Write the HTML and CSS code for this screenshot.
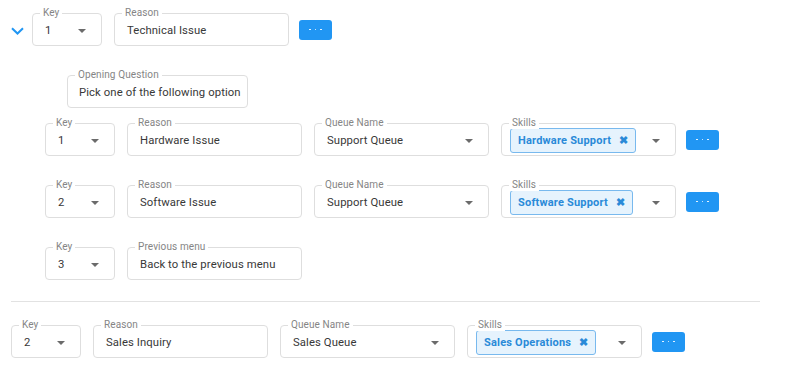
FILE: index.html
```html
<!DOCTYPE html>
<html>
<head>
<meta charset="utf-8">
<link rel="stylesheet" href="styles.css">
</head>
<body>
<div class="page">
  <div class="row row-top">
    <svg class="chevron" width="13" height="8" viewBox="0 0 13 8"><path d="M1 1.2 L6.5 6.5 L12 1.2" fill="none" stroke="#2196f3" stroke-width="2"/></svg>
    <div class="field key"><span class="label">Key</span><span class="value">1</span><span class="arrow"></span></div>
    <div class="field wide"><span class="label">Reason</span><span class="value">Technical Issue</span></div>
    <button class="more"><span></span><span></span><span></span></button>
  </div>

  <div class="row row-question">
    <div class="field question"><span class="label">Opening Question</span><span class="value">Pick one of the following option</span></div>
  </div>

  <div class="sub">
    <div class="row">
      <div class="field key"><span class="label">Key</span><span class="value">1</span><span class="arrow"></span></div>
      <div class="field wide"><span class="label">Reason</span><span class="value">Hardware Issue</span></div>
      <div class="field wide"><span class="label">Queue Name</span><span class="value">Support Queue</span><span class="arrow"></span></div>
      <div class="field wide skills"><span class="label">Skills</span><span class="chip">Hardware Support<span class="x">✖</span></span><span class="arrow"></span></div>
      <button class="more"><span></span><span></span><span></span></button>
    </div>
    <div class="row">
      <div class="field key"><span class="label">Key</span><span class="value">2</span><span class="arrow"></span></div>
      <div class="field wide"><span class="label">Reason</span><span class="value">Software Issue</span></div>
      <div class="field wide"><span class="label">Queue Name</span><span class="value">Support Queue</span><span class="arrow"></span></div>
      <div class="field wide skills"><span class="label">Skills</span><span class="chip">Software Support<span class="x">✖</span></span><span class="arrow"></span></div>
      <button class="more"><span></span><span></span><span></span></button>
    </div>
    <div class="row">
      <div class="field key"><span class="label">Key</span><span class="value">3</span><span class="arrow"></span></div>
      <div class="field wide"><span class="label">Previous menu</span><span class="value">Back to the previous menu</span></div>
    </div>
  </div>

  <hr class="divider">

  <div class="row row-bottom">
    <div class="field key"><span class="label">Key</span><span class="value">2</span><span class="arrow"></span></div>
    <div class="field wide"><span class="label">Reason</span><span class="value">Sales Inquiry</span></div>
    <div class="field wide"><span class="label">Queue Name</span><span class="value">Sales Queue</span><span class="arrow"></span></div>
    <div class="field wide skills"><span class="label">Skills</span><span class="chip">Sales Operations<span class="x">✖</span></span><span class="arrow"></span></div>
    <button class="more"><span></span><span></span><span></span></button>
  </div>
</div>
</body>
</html>
```
FILE: styles.css
```css
* { box-sizing: border-box; }
html, body { margin: 0; padding: 0; background: #fff; }
body { font-family: Roboto, "Noto Sans", Arial, sans-serif; color: #333; }

.page { padding-top: 13px; width: 790px; }

.row { display: flex; align-items: center; gap: 12px; height: 33px; }

.row-top { padding-left: 11px; }
.chevron { margin-right: -4px; margin-top: 2px; }

.row-question { margin-top: 29px; padding-left: 67px; }

.sub { margin-top: 15px; padding-left: 45px; display: flex; flex-direction: column; gap: 29px; }

.divider { margin: 21px 0 0 11px; width: 749px; border: 0; border-top: 1px solid #e2e2e2; height: 0; }

.row-bottom { margin-top: 23px; padding-left: 11px; }

.field {
  position: relative;
  height: 33px;
  border: 1px solid #dedede;
  border-radius: 4px;
  display: flex;
  align-items: center;
  padding: 2px 15px 0 12px;
  font-size: 11.3px;
  letter-spacing: 0.1px;
  color: #383838;
  flex: none;
}
.field.key { width: 70px; }
.field.wide { width: 175px; }
.field.question { width: 181px; padding-left: 11px; }
.field.skills { padding-left: 8px; }

.label {
  position: absolute;
  top: -7px;
  left: 7px;
  padding: 0 3px;
  background: #fff;
  font-size: 10px;
  line-height: 12px;
  color: #858585;
}

.value { white-space: nowrap; }

.arrow {
  margin-left: auto;
  width: 0; height: 0;
  border-left: 4px solid transparent;
  border-right: 4px solid transparent;
  border-top: 4px solid #6b6b6b;
}

.chip {
  display: inline-flex;
  align-items: center;
  height: 25px;
  padding: 0 7px 0 7px;
  margin-top: -1px;
  background: #e6f3fd;
  border: 1px solid #78b9ee;
  border-radius: 3px;
  color: #2a8ad8;
  font-weight: 700;
  font-size: 11px;
  letter-spacing: 0.2px;
  white-space: nowrap;
}
.chip .x { margin-left: 8px; font-size: 10.5px; }

.more {
  flex: none;
  width: 33px;
  height: 20px;
  border: 0;
  border-radius: 3px;
  background: #2196f3;
  display: flex;
  align-items: center;
  justify-content: center;
  gap: 4px;
  padding: 0;
  margin-left: -2px;
}
.more span { width: 1.6px; height: 1.6px; background: #fff; border-radius: 50%; }
```
